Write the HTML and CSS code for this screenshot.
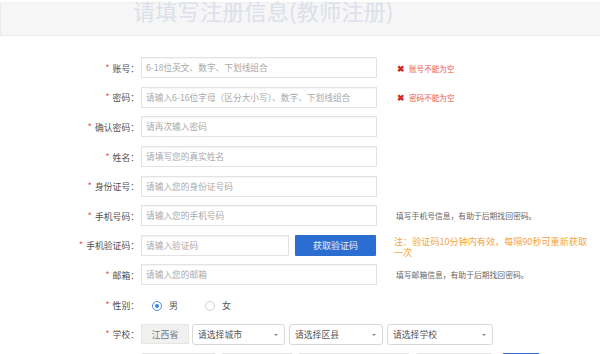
FILE: index.html
```html
<!DOCTYPE html>
<html lang="zh-CN">
<head>
  <meta charset="UTF-8" />
  <title>教师注册</title>
  <link rel="stylesheet" href="styles.css">
</head>
<body>
  <div class="page-head">
    <h1 class="page-title">请填写注册信息(教师注册)</h1>
  </div>

  <div class="form">
    <div class="row">
      <label class="label"><span class="req">*</span>账号：</label>
      <input class="field" placeholder="6-18位英文、数字、下划线组合">
      <span class="msg msg-error"><i class="x">✖</i>账号不能为空</span>
    </div>
    <div class="row">
      <label class="label"><span class="req">*</span>密码：</label>
      <input class="field" placeholder="请输入6-16位字母（区分大小写）、数字、下划线组合">
      <span class="msg msg-error"><i class="x">✖</i>密码不能为空</span>
    </div>
    <div class="row">
      <label class="label"><span class="req">*</span>确认密码：</label>
      <input class="field" placeholder="请再次输入密码">
    </div>
    <div class="row">
      <label class="label"><span class="req">*</span>姓名：</label>
      <input class="field" placeholder="请填写您的真实姓名">
    </div>
    <div class="row">
      <label class="label"><span class="req">*</span>身份证号：</label>
      <input class="field" placeholder="请输入您的身份证号码">
    </div>
    <div class="row">
      <label class="label"><span class="req">*</span>手机号码：</label>
      <input class="field" placeholder="请输入您的手机号码">
      <span class="msg msg-hint">填写手机号信息，有助于后期找回密码。</span>
    </div>
    <div class="row">
      <label class="label"><span class="req">*</span>手机验证码：</label>
      <input class="field field-code" placeholder="请输入验证码">
      <button class="code-btn">获取验证码</button>
      <span class="msg msg-note">注：验证码10分钟内有效，每隔90秒可重新获取一次</span>
    </div>
    <div class="row">
      <label class="label"><span class="req">*</span>邮箱：</label>
      <input class="field" placeholder="请输入您的邮箱">
      <span class="msg msg-hint">填写邮箱信息，有助于后期找回密码。</span>
    </div>
    <div class="row">
      <label class="label"><span class="req">*</span>性别：</label>
      <div class="radios">
        <span class="radio checked"></span><span class="radio-text">男</span>
        <span class="radio"></span><span class="radio-text">女</span>
      </div>
    </div>
    <div class="row">
      <label class="label"><span class="req">*</span>学校：</label>
      <div class="selects">
        <span class="province">江西省</span>
        <span class="select sel-city">请选择城市</span>
        <span class="select sel-area">请选择区县</span>
        <span class="select sel-school">请选择学校</span>
      </div>
    </div>
    <div class="row">
      <label class="label"></label>
      <div class="selects">
        <span class="box box-a"></span>
        <span class="box box-b"></span>
        <span class="box box-c"></span>
        <span class="box box-d"></span>
        <span class="box box-blue"></span>
      </div>
    </div>
  </div>
</body>
</html>
```

FILE: styles.css
```css
body {
  margin: 0;
  background: #fff;
  font-family: "Noto Sans CJK SC", "Noto Sans", sans-serif;
  color: #555;
  overflow: hidden;
}

.page-head {
  margin-top: 2px;
  height: 32px;
  background: #f6f6f6;
  border-top: 1px solid #f0f0f0;
  border-bottom: 1px solid #ececec;
  border-left: 1px solid #e9e9e9;
  padding-left: 132px;
}

.page-title {
  margin: -5px 0 0;
  font-size: 22px;
  line-height: 24px;
  font-weight: normal;
  color: #dbe0ea;
  letter-spacing: 0.3px;
}

.form {
  padding-top: 17px;
}

.row {
  display: flex;
  align-items: center;
  height: 29.6px;
}

.label {
  flex: none;
  width: 139px;
  padding-right: 2px;
  text-align: right;
  font-size: 8.8px;
  color: #4f4f4f;
}

.req {
  color: #e8584a;
  margin-right: 3px;
  font-size: 9.5px;
}

.field {
  flex: none;
  width: 236px;
  height: 21px;
  box-sizing: border-box;
  margin: 0;
  padding: 0 4px;
  border: 1px solid #e3e3e3;
  box-shadow: inset 0 1px 1px rgba(0,0,0,0.04);
  font-family: inherit;
  font-size: 8.7px;
  color: #555;
  outline: none;
}
.field::placeholder {
  color: #a9a9a9;
}

.field-code {
  width: 148px;
}

.code-btn {
  flex: none;
  width: 81px;
  height: 21px;
  margin-left: 6px;
  padding: 0;
  border: none;
  border-radius: 1px;
  background: #2b6dd1;
  color: #e9f0fb;
  font-family: inherit;
  font-size: 9px;
}

.msg {
  margin-left: 19px;
}

.msg-error {
  color: #ec5a4b;
  font-size: 7.6px;
  margin-left: 20px;
}
.x {
  font-style: normal;
  color: #d3281e;
  font-weight: bold;
  font-size: 8.5px;
  margin-right: 4px;
}

.msg-hint {
  color: #666;
  font-size: 7.8px;
}

.msg-note {
  width: 196px;
  margin-left: 18px;
  margin-top: 3px;
  color: #f7a33b;
  font-size: 9.1px;
  line-height: 11px;
}

.radios {
  display: flex;
  align-items: center;
  padding-left: 11px;
  margin-top: 2px;
  font-size: 9px;
  color: #555;
}

.radio {
  width: 10px;
  height: 10px;
  box-sizing: border-box;
  border: 1px solid #cfcfcf;
  border-radius: 50%;
  display: flex;
  align-items: center;
  justify-content: center;
}
.radio.checked {
  border-color: #4a90e6;
}
.radio.checked::after {
  content: "";
  width: 4px;
  height: 4px;
  border-radius: 50%;
  background: #3a86e4;
}

.radio-text {
  margin-left: 7px;
  margin-right: 27px;
}

.selects {
  display: flex;
  align-items: center;
  gap: 4px;
  font-size: 8.8px;
}

.province {
  width: 48px;
  height: 20px;
  box-sizing: border-box;
  border: 1px solid #e6e6e6;
  background: #f0f0f0;
  color: #777;
  display: flex;
  align-items: center;
  justify-content: center;
  margin-right: -1px;
}

.select {
  height: 21px;
  box-sizing: border-box;
  border: 1px solid #d9d9d9;
  border-radius: 3px;
  padding-left: 5px;
  color: #555;
  display: flex;
  align-items: center;
  position: relative;
  background: #fff;
}
.select::after {
  content: "";
  position: absolute;
  right: 6px;
  top: 9px;
  border-left: 2px solid transparent;
  border-right: 2px solid transparent;
  border-top: 2px solid #888;
}
.sel-city { width: 93px; }
.sel-area { width: 94px; }
.sel-school { width: 106px; }

.box {
  height: 21px;
  box-sizing: border-box;
  border: 1px solid #e1e1e1;
  border-radius: 2px;
  background: #fff;
}
.box-a { width: 75px; }
.box-b { width: 72px; margin-left: 1px; }
.box-c { width: 112px; margin-left: 1px; }
.box-d { width: 77px; margin-left: 1px; }
.box-blue { width: 38px; margin-left: 6px; background: #2b6dd1; border-color: #2b6dd1; }
```
